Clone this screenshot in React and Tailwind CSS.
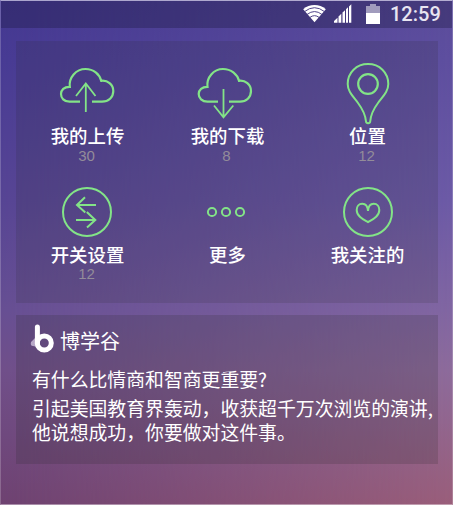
import React from "react";

const stroke = { fill: "none", stroke: "#83e487", strokeWidth: 2 };

function UploadIcon() {
  return (
    <svg width="100" height="70" viewBox="0 0 100 70" {...stroke} strokeWidth="2.2">
      <path d="M40 46.7H29.5C24 46.7 21 43 21 39C21 35 24 31.7 29.8 31.8C28.6 22.5 36 14 45.5 14C53.5 14 59.5 19 61.2 25.8C67.5 25 73.3 29.5 73.3 36C73.3 42.3 68.5 46.7 62 46.7H52" />
      <path strokeWidth="1.8" d="M45.8 57V29M36 41L45.8 28.5L55.5 41" />
    </svg>
  );
}

function DownloadIcon() {
  return (
    <svg width="100" height="70" viewBox="0 0 100 70" {...stroke} strokeWidth="2.2">
      <path d="M38 46.7H27.5C22 46.7 18.7 43 18.7 39C18.7 35 22 31.7 27.5 31.8C26.3 22.5 33.5 14 43 14C51 14 57.3 19 59 25.8C65.3 25 71 29.5 71 36C71 42.3 66.3 46.7 60 46.7H49" />
      <path strokeWidth="1.8" d="M43.5 34V62M34 50.5L43.5 62.3L53.3 50.5" />
    </svg>
  );
}

function LocationIcon() {
  return (
    <svg width="100" height="70" viewBox="0 0 100 70" {...stroke}>
      <path d="M46 66.5C45.4 59.5 42.5 54 38 48C33 41.3 27.7 36.5 27.7 29C27.7 17.5 36.5 9 48 9S68.3 17.5 68.3 29C68.3 36.5 63 41.3 58 48C53.5 54 50.8 59.5 50.2 66.5Q50 68.2 48.1 68.2T46 66.5Z" />
      <circle cx="48" cy="29" r="9.8" strokeWidth="2.2" />
    </svg>
  );
}

function SwitchIcon() {
  return (
    <svg width="100" height="60" viewBox="0 0 100 60" {...stroke}>
      <circle cx="47" cy="32" r="24" />
      <path d="M56 25H37M45 17.3L37 25L45.3 32.5M36 40H55M46.8 32L55.3 40L47 47.5" />
    </svg>
  );
}

function MoreIcon() {
  return (
    <svg width="100" height="60" viewBox="0 0 100 60" {...stroke}>
      <circle cx="32" cy="32" r="4.1" />
      <circle cx="46" cy="32" r="4.1" />
      <circle cx="60" cy="32" r="4.1" />
    </svg>
  );
}

function HeartIcon() {
  return (
    <svg width="100" height="60" viewBox="0 0 100 60" {...stroke}>
      <circle cx="48" cy="32" r="24" />
      <path d="M48 31C48.3 26.5 50.5 23.7 53.7 23.7C57.3 23.7 59.3 26.7 59.3 30C59.3 36.5 52.5 39.5 48 42.2C43.5 39.5 36.7 36.5 36.7 30C36.7 26.7 38.7 23.7 42.3 23.7C45.5 23.7 47.7 26.5 48 31Z" />
    </svg>
  );
}

const rows = [
  [
    { icon: <UploadIcon />, label: "我的上传", count: "30" },
    { icon: <DownloadIcon />, label: "我的下载", count: "8" },
    { icon: <LocationIcon />, label: "位置", count: "12" },
  ],
  [
    { icon: <SwitchIcon />, label: "开关设置", count: "12" },
    { icon: <MoreIcon />, label: "更多" },
    { icon: <HeartIcon />, label: "我关注的" },
  ],
];

function Tile({ icon, label, count, labelGap }) {
  return (
    <div className="flex w-[100px] flex-col items-center">
      {icon}
      <div className={`${labelGap} mr-[5px] w-[96px] text-center text-[18.4px] leading-[22px] font-medium text-white`}>{label}</div>
      <div className="mr-[7px] h-[20px] font-['Liberation_Sans',sans-serif] text-[15px] leading-[20px] text-[#938c99]">{count}</div>
    </div>
  );
}

function StatusBar() {
  return (
    <div className="flex h-[27px] shrink-0 items-start bg-[#1d1b42]/35 pl-[301px]">
      <svg width="84" height="26" viewBox="302 1 84 26" fill="#fff">
        <path d="M303.2 9.2C309.5 3.6 319.5 3.6 325.8 9.2L314.5 22.3Z" />
        <g fill="none" stroke="#51458a" strokeWidth="1">
          <path d="M304.5 11.6Q314.5 3.8 324.5 11.6M307 14.5Q314.5 8.6 322 14.5M309.8 17.5Q314.5 13.8 319.2 17.5" />
        </g>
        <path d="M334 22.7V21L337.5 17.7V22.7ZM338.5 22.7V16.5L341.3 13.7V22.7ZM342.5 22.7V12.6L345 10.2V22.7ZM346 22.7V9.2L348 7.3V22.7ZM349 22.7V6.4L351.3 4.2V22.7Z" />
        <path opacity=".5" d="M366 6H370V4H376V6H380V13H366Z" />
        <path d="M366 13H380V24H366Z" />
      </svg>
      <span className="ml-[4px] mt-[1px] font-['Roboto',sans-serif] text-[20px] leading-[25px] font-medium text-[#e8e5f1]">12:59</span>
    </div>
  );
}

export default function App() {
  return (
    <div className="relative h-[505px] w-[453px] overflow-hidden bg-[linear-gradient(to_bottom,#443891_0px,#483b94_60px,#574594_200px,#674f93_310px,#704f8a_370px,#6e4271_505px)] font-['Noto_Sans_CJK_SC',sans-serif]">
      <div className="absolute inset-0 bg-[linear-gradient(to_bottom,#5b4c9b_0px,#5e4f9f_60px,#6c5aa6_200px,#8166a2_310px,#8d6b9b_370px,#9a5e7a_505px)] [mask-image:linear-gradient(to_right,transparent,black)]" />
      <div className="relative flex h-full flex-col border border-white/20 border-t-white/55 border-b-white/40">
        <StatusBar />
        <section className="ml-[15px] mt-[13px] h-[262px] w-[422px] shrink-0 bg-[#2a2a2a]/15 pt-[14px] pl-[24px]">
          {rows.map((row, i) => (
            <div key={i} className={i === 0 ? "flex h-[125px] gap-[40px]" : "flex gap-[40px]"}>
              {row.map((item) => (
                <Tile key={item.label} {...item} labelGap={i === 0 ? "-mt-[1px]" : "mt-[3px] -mb-[1px]"} />
              ))}
            </div>
          ))}
        </section>
        <section className="ml-[15px] mt-[12px] h-[149px] w-[422px] shrink-0 bg-[#252525]/18 pl-[14px] pt-[8px] text-white">
          <div className="flex h-[34px] items-center">
            <svg width="25" height="30" viewBox="0 0 25 30" className="-mt-[5px]">
              <path d="M7 13L1 19Q0 23 3 23L8 24Z" fill="#b7a8c7" />
              <path d="M7.4 4V20" stroke="#fff" strokeWidth="5" strokeLinecap="round" />
              <circle cx="14.3" cy="20" r="7" fill="none" stroke="#fff" strokeWidth="5" />
            </svg>
            <span className="ml-[5px] mt-[2px] text-[20px] leading-[30px]">博学谷</span>
          </div>
          <div className="ml-[2px] mt-[8px] whitespace-nowrap text-[18.85px] leading-[28px]">有什么比情商和智商更重要?</div>
          <div className="ml-[2px] mt-[3px] whitespace-nowrap text-[18.85px] leading-[24px]">
            <div>引起美国教育界轰动，收获超千万次浏览的演讲,</div>
            <div>他说想成功，你要做对这件事。</div>
          </div>
        </section>
      </div>
    </div>
  );
}
